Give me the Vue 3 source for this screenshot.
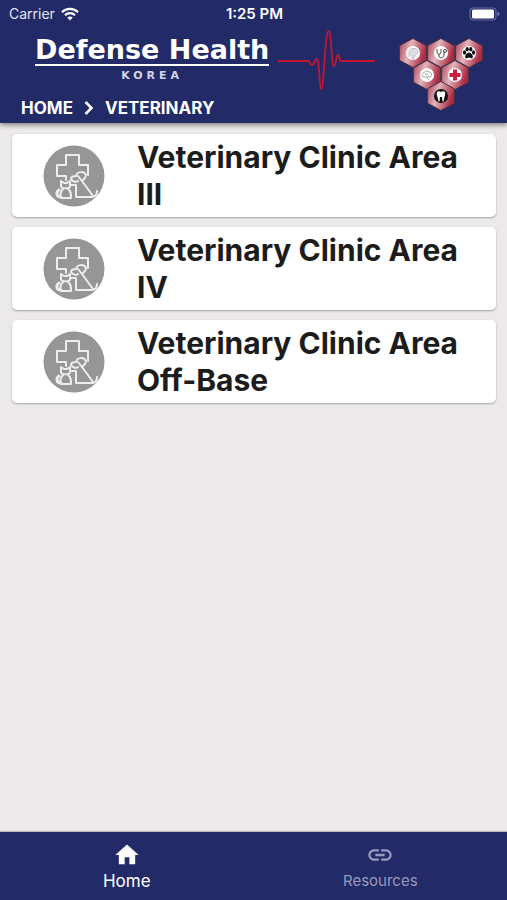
<script setup>
const clinics = [
  'Veterinary Clinic Area III',
  'Veterinary Clinic Area IV',
  'Veterinary Clinic Area Off-Base',
]

const hexagons = [
  { x: 14, y: 15, kind: 'head' },
  { x: 42, y: 15, kind: 'stethoscope' },
  { x: 70, y: 15, kind: 'paw' },
  { x: 28, y: 37, kind: 'brain' },
  { x: 56, y: 37, kind: 'cross' },
  { x: 42, y: 58, kind: 'tooth' },
]
</script>

<template>
  <div class="app">
    <header class="header">
      <div class="status">
        <div class="carrier">
          <span>Carrier</span>
          <svg width="18" height="14" viewBox="0 0 18 14" aria-hidden="true">
            <g fill="none" stroke="#fff" stroke-width="2.3">
              <path d="M1 5.2C5.400 0.700 12.600 0.700 17 5.200" />
              <path d="M4 8.300C6.800 5.500 11.200 5.500 14 8.300" />
            </g>
            <path d="M6.300 10.600C7.800 9.100 10.200 9.100 11.700 10.600L9 13.500Z" fill="#fff" />
          </svg>
        </div>
        <time class="clock">1:25 PM</time>
        <svg class="battery" width="31" height="14" viewBox="0 0 31 14" aria-hidden="true">
          <rect x="1" y="1" width="26" height="12" rx="3.500" fill="none" stroke="#6468a0" stroke-width="1.200" />
          <rect x="3" y="2.500" width="22" height="9" rx="1.500" fill="#fff" />
          <path d="M28.500 5V9Q30.500 8.500 30.500 7T28.500 5Z" fill="#8084b0" />
        </svg>
      </div>

      <div class="banner">
        <div class="brand">
          <span class="brand-name">Defense Health</span>
          <span class="brand-place">KOREA</span>
        </div>
        <svg class="pulse" width="98" height="66" viewBox="0 0 98 66" aria-hidden="true">
          <path
            d="M0 34H30C32 34 32 38 34 38C37 38 36 32 39 32C42 34 41 62 43 62C46 62 47 4 50.500 4C54 4 53 39 56 39C58 39 58 28 60 28C62 28 61 34 63 34H97"
            fill="none" stroke="#c41632" stroke-width="1.800" stroke-linejoin="round"
          />
        </svg>
        <svg class="badge" width="84" height="74" viewBox="0 0 84 74" aria-hidden="true">
          <defs>
            <linearGradient id="hex-fill" x1="0" y1="0" x2="1" y2="0.300">
              <stop offset="0" stop-color="#a84355" />
              <stop offset="0.450" stop-color="#e3b4bd" />
              <stop offset="1" stop-color="#ab2b43" />
            </linearGradient>
          </defs>
          <g v-for="hex in hexagons" :key="hex.kind" :transform="`translate(${hex.x} ${hex.y})`">
            <path d="M0 -14.500L13.400 -7.300V7.300L0 14.500L-13.400 7.300V-7.300Z" fill="url(#hex-fill)" stroke="#4b3545" />
            <circle r="7" :fill="hex.kind === 'tooth' ? '#111' : '#fff'" />
            <path
              v-if="hex.kind === 'head'"
              d="M-4 4V0C-5 -5 2 -6 4.500 -3C6 0 4 2 2 2L1 6H-1V2"
              fill="#dedee4" stroke="#b9b9c4" stroke-width="0.800"
            />
            <g v-else-if="hex.kind === 'stethoscope'" fill="none" stroke="#333" stroke-width="0.900">
              <path d="M-4 -4V-1C-4 2 0 2 0 -1V-4M-2 1V3C-2 6 3 5 3 2V-1" />
              <circle cx="4" cy="-2" r="1.500" />
            </g>
            <g v-else-if="hex.kind === 'paw'" fill="#111">
              <ellipse cx="-4.500" cy="-0.500" rx="1.600" ry="2.300" />
              <ellipse cx="-1.800" cy="-3.700" rx="1.600" ry="2.300" />
              <ellipse cx="1.800" cy="-3.700" rx="1.600" ry="2.300" />
              <ellipse cx="4.500" cy="-0.500" rx="1.600" ry="2.300" />
              <path d="M0 -0.500C2 -0.500 5 3 3.500 5C2 6 1.500 4.500 0 4.500S-2 6 -3.500 5C-5 3 -2 -0.500 0 -0.500Z" />
            </g>
            <path
              v-else-if="hex.kind === 'brain'"
              d="M-4 2C-6 0 -4 -2 -3 -2C-2 -5 1 -4 2 -3C5 -3 5 0 4 1C4 3 1 2 0 0M-4 2H0L2 5M-2 -1L1 -1"
              fill="none" stroke="#8a8a93" stroke-width="0.800"
            />
            <path
              v-else-if="hex.kind === 'cross'"
              d="M-2 -5.500H2V-2H5.500V2H2V5.500H-2V2H-5.500V-2H-2Z"
              fill="#c91f3b"
            />
            <path
              v-else
              d="M-4 -4C-2 -5.500 -1 -4 0 -4S2 -5.500 4 -4C5 -2 3.500 0 3.300 2L2.500 5.500H1.500L1 1H-1L-1.500 5.500H-2.500L-3.300 2C-3.500 0 -5 -2 -4 -4Z"
              fill="#fff"
            />
          </g>
        </svg>
        <nav class="crumbs" aria-label="Breadcrumb">
          <a href="#home">HOME</a>
          <svg width="10" height="16" viewBox="0 0 10 16" aria-hidden="true">
            <path d="M1.500 2L7.500 8L1.500 14" fill="none" stroke="#fff" stroke-width="2.500" />
          </svg>
          <a href="#veterinary" aria-current="page">VETERINARY</a>
        </nav>
      </div>
    </header>

    <main class="list">
      <a v-for="clinic in clinics" :key="clinic" class="card" href="#clinic">
        <svg class="card-icon" width="62" height="62" viewBox="0 0 62 62" aria-hidden="true">
          <circle cx="31" cy="31" r="30.500" fill="#969696" />
          <g fill="none" stroke="#ededed" stroke-width="2" stroke-linejoin="round" stroke-linecap="round">
            <path d="M23 35V31H14V20H23V10H36V20H45V30" />
            <path d="M18 36L21 38H24L27 36V41C27 44 18 44 18 41Z" />
            <path d="M20 44C17 47 17 50 18 53H28C28 49 28 46 25 44" />
            <path d="M18 52C13 52 13 47 16 45" stroke-width="3" />
            <path d="M35 36C33 38 29 36 28 34C28 31 31 31 33 31C34 26 41 26 43 30C43 33 41 34 39 36L35 31" />
            <path d="M27 40H33V52H49C53 52 54 49 54 46M39 36L50 51" />
          </g>
        </svg>
        <span class="card-title">{{ clinic }}</span>
      </a>
    </main>

    <nav class="tabs" aria-label="Main">
      <a class="tab active" href="#home">
        <svg width="28" height="28" viewBox="0 0 24 24" aria-hidden="true">
          <path d="M10 20v-6h4v6h5v-8h3L12 3 2 12h3v8z" fill="currentColor" />
        </svg>
        <span>Home</span>
      </a>
      <a class="tab" href="#resources">
        <svg width="28" height="28" viewBox="0 0 24 24" aria-hidden="true">
          <path
            d="M3.900 12c0-1.710 1.390-3.100 3.100-3.100h4V7H7c-2.760 0-5 2.240-5 5s2.240 5 5 5h4v-1.900H7c-1.710 0-3.100-1.390-3.100-3.100zM8 13h8v-2H8v2zm9-6h-4v1.900h4c1.710 0 3.100 1.390 3.100 3.100s-1.390 3.100-3.100 3.100h-4V17h4c2.760 0 5-2.240 5-5s-2.240-5-5-5z"
            fill="currentColor"
          />
        </svg>
        <span>Resources</span>
      </a>
    </nav>
  </div>
</template>

<style>
body {
  margin: 0;
  background: #ebe9ea;
}
</style>

<style scoped>
.app {
  display: flex;
  flex-direction: column;
  min-height: 100vh;
  font-family: Inter, "Liberation Sans", sans-serif;
}

a {
  color: inherit;
  text-decoration: none;
}

.header {
  background: #222b67;
  color: #fff;
  box-shadow: 0 2px 5px rgba(0, 0, 0, 0.45);
}

.status {
  display: grid;
  grid-template-columns: 1fr auto 1fr;
  align-items: center;
  height: 27px;
  padding: 0 7px 0 9px;
  font-size: 14px;
}

.carrier {
  display: flex;
  align-items: center;
  gap: 6px;
  color: #e3e4ef;
}

.clock {
  font-size: 15px;
  font-weight: 600;
}

.battery {
  justify-self: end;
}

.banner {
  display: grid;
  grid-template-columns: auto auto 1fr;
  grid-template-rows: 66px 30px;
  column-gap: 9px;
  padding: 0 24px 0 21px;
}

.brand {
  display: flex;
  flex-direction: column;
  align-items: center;
  padding: 9px 0 0 14px;
}

.brand-name {
  border-bottom: 2px solid #fff;
  font-family: "DejaVu Sans", sans-serif;
  font-size: 27px;
  font-weight: 700;
  line-height: 28px;
}

.brand-place {
  margin-top: 4px;
  font-family: "DejaVu Sans", sans-serif;
  font-size: 11px;
  font-weight: 700;
  line-height: 12px;
  letter-spacing: 4px;
  color: #d5d7e6;
}

.badge {
  grid-column: 3;
  grid-row: 1 / 3;
  justify-self: end;
  margin-top: 11px;
}

.crumbs {
  grid-column: 1 / 3;
  grid-row: 2;
  display: flex;
  align-items: center;
  gap: 11px;
  font-size: 17px;
  font-weight: 700;
}

.list {
  flex: 1;
  display: flex;
  flex-direction: column;
  gap: 10px;
  padding: 11px 11px 24px 12px;
}

.card {
  display: flex;
  align-items: center;
  gap: 32px;
  padding: 5px 16px 4px 31px;
  border-radius: 5px;
  background: #fff;
  box-shadow: 0 1px 2px rgba(0, 0, 0, 0.3);
}

.card-icon {
  flex: none;
}

.card-title {
  font-size: 30px;
  font-weight: 700;
  line-height: 37px;
  color: #1c1c1c;
}

.tabs {
  display: flex;
  height: 68px;
  background: #222b67;
  box-shadow: 0 -1px 1px rgba(0, 0, 0, 0.2);
}

.tab {
  flex: 1;
  display: flex;
  flex-direction: column;
  align-items: center;
  justify-content: center;
  gap: 2px;
  font-size: 15px;
  line-height: 20px;
  color: #969abe;
}

.tab.active {
  font-size: 17px;
  color: #fff;
}
</style>
